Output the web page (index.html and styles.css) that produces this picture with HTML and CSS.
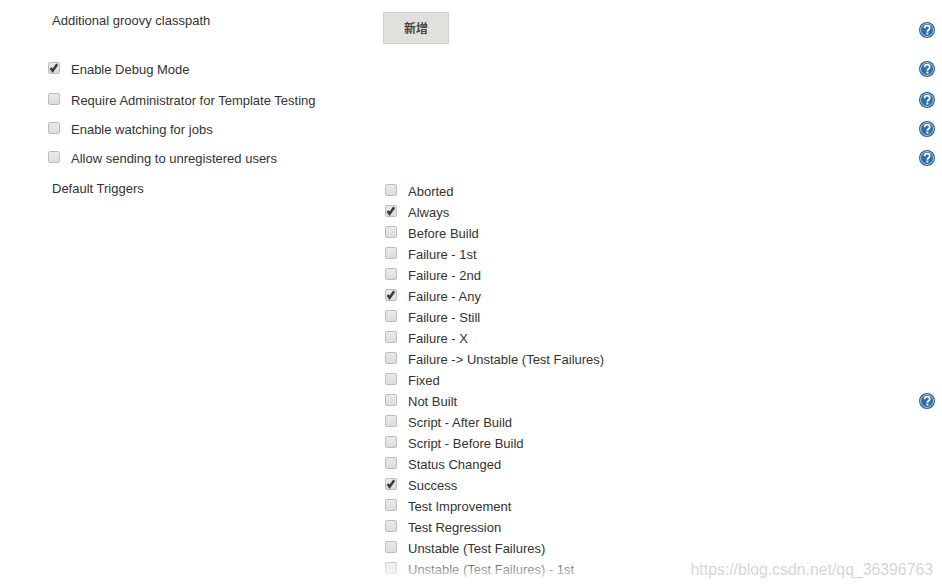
FILE: index.html
```html
<!DOCTYPE html>
<html lang="en">
<head>
<meta charset="utf-8">
<title>Configure</title>
<link rel="stylesheet" href="styles.css">
</head>
<body>
<svg class="defs" width="0" height="0" aria-hidden="true">
  <defs>
    <symbol id="help" viewBox="0 0 16 16">
      <circle cx="8" cy="8" r="8" fill="#2b6596"/>
      <circle cx="8" cy="8" r="6.3" fill="none" stroke="#cfe0ec" stroke-width="1"/>
      <circle cx="8" cy="8" r="5.7" fill="#2f6fa5"/>
      <path d="M5.5 6.2C5.6 4.5 6.7 3.6 8.1 3.6C9.7 3.6 10.7 4.5 10.7 5.9C10.7 6.9 10.1 7.5 9.4 8C8.7 8.5 8.4 8.8 8.4 9.7" fill="none" stroke="#fff" stroke-width="1.7"/>
      <rect x="7.4" y="10.6" width="2" height="1.9" fill="#fff"/>
    </symbol>
    <symbol id="tick" viewBox="0 0 12 12">
      <path d="M2.6 6L4.6 8.8L9.2 2.2" fill="none" stroke="#3a3a3a" stroke-width="2.5"/>
    </symbol>
  </defs>
</svg>
<main class="form">
  <section class="row row-classpath">
    <div class="label">Additional groovy classpath</div>
    <div class="field"><button class="btn" type="button">新增</button></div>
    <svg class="help help-top"><use href="#help"/></svg>
  </section>
  <section class="row row-check row-debug">
    <span class="box checked"><svg class="tick"><use href="#tick"/></svg></span>
    <span class="check-label">Enable Debug Mode</span>
    <svg class="help"><use href="#help"/></svg>
  </section>
  <section class="row row-check row-admin">
    <span class="box"></span>
    <span class="check-label">Require Administrator for Template Testing</span>
    <svg class="help"><use href="#help"/></svg>
  </section>
  <section class="row row-check row-watch">
    <span class="box"></span>
    <span class="check-label">Enable watching for jobs</span>
    <svg class="help"><use href="#help"/></svg>
  </section>
  <section class="row row-check row-allow">
    <span class="box"></span>
    <span class="check-label">Allow sending to unregistered users</span>
    <svg class="help"><use href="#help"/></svg>
  </section>
  <section class="row row-triggers">
    <div class="label">Default Triggers</div>
    <ul class="triggers">
      <li class="trigger"><span class="box"></span><span>Aborted</span></li>
      <li class="trigger"><span class="box checked"><svg class="tick"><use href="#tick"/></svg></span><span>Always</span></li>
      <li class="trigger"><span class="box"></span><span>Before Build</span></li>
      <li class="trigger"><span class="box"></span><span>Failure - 1st</span></li>
      <li class="trigger"><span class="box"></span><span>Failure - 2nd</span></li>
      <li class="trigger"><span class="box checked"><svg class="tick"><use href="#tick"/></svg></span><span>Failure - Any</span></li>
      <li class="trigger"><span class="box"></span><span>Failure - Still</span></li>
      <li class="trigger"><span class="box"></span><span>Failure - X</span></li>
      <li class="trigger"><span class="box"></span><span>Failure -&gt; Unstable (Test Failures)</span></li>
      <li class="trigger"><span class="box"></span><span>Fixed</span></li>
      <li class="trigger"><span class="box"></span><span>Not Built</span></li>
      <li class="trigger"><span class="box"></span><span>Script - After Build</span></li>
      <li class="trigger"><span class="box"></span><span>Script - Before Build</span></li>
      <li class="trigger"><span class="box"></span><span>Status Changed</span></li>
      <li class="trigger"><span class="box checked"><svg class="tick"><use href="#tick"/></svg></span><span>Success</span></li>
      <li class="trigger"><span class="box"></span><span>Test Improvement</span></li>
      <li class="trigger"><span class="box"></span><span>Test Regression</span></li>
      <li class="trigger"><span class="box"></span><span>Unstable (Test Failures)</span></li>
      <li class="trigger"><span class="box"></span><span>Unstable (Test Failures) - 1st</span></li>
    </ul>
    <svg class="help"><use href="#help"/></svg>
  </section>
</main>
<div class="fade"></div>
<div class="watermark">https://blog.csdn.net/qq_36396763</div>
</body>
</html>
```
FILE: styles.css
```css
html, body {
  margin: 0;
  height: 587px;
  overflow: hidden;
  background: #fff;
}
body {
  font-family: "Liberation Sans", Arial, "Noto Sans CJK SC", sans-serif;
  font-size: 13px;
  color: #333;
  position: relative;
}
.defs { position: absolute; }
.form {
  display: flex;
  flex-direction: column;
  width: 942px;
}
.row {
  display: flex;
  align-items: center;
  padding-right: 7px;
  padding-left: 48px;
  box-sizing: border-box;
}
.help {
  width: 16px;
  height: 16px;
  margin-left: auto;
  flex: none;
}
.label {
  width: 331px;
  padding-left: 4px;
  box-sizing: border-box;
  flex: none;
}
.row-classpath {
  height: 48px;
  padding-top: 12px;
  align-items: flex-start;
}
.row-classpath .label { margin-top: 1px; }
.help-top { margin-top: 10px; }
.btn {
  width: 66px;
  height: 32px;
  margin-left: 4px;
  border: 1px solid #d3d1cb;
  background: #e2e0dc;
  font: bold 12px "Noto Sans CJK SC", sans-serif;
  color: #444;
  padding: 0 0 2px;
}
.box {
  width: 12px;
  height: 12px;
  flex: none;
  box-sizing: border-box;
  border: 1px solid #bdbdbd;
  border-radius: 2px;
  background: linear-gradient(#eaeaea, #dcdcdc);
  display: block;
  position: relative;
}
.tick {
  width: 12px;
  height: 12px;
  position: absolute;
  left: -1px;
  top: -1px;
}
.row-check { height: 29px; }
.row-check .box { margin-top: -4px; }
.row-check .help { margin-top: -2px; }
.check-label { margin-left: 11px; }
.row-debug { height: 35px; margin-top: 4px; }
.row-admin { height: 27px; }
.row-watch { margin-top: 1px; }
.row-triggers {
  align-items: flex-start;
  height: 414px;
}
.row-triggers .label { margin-top: 8px; }
.row-triggers .help { margin-top: 220px; }
.triggers {
  list-style: none;
  margin: 8px 0 0;
  padding: 0 0 0 6px;
}
.trigger {
  display: flex;
  align-items: center;
  height: 21px;
  gap: 11px;
}
.trigger .box { margin-top: -4px; }
.fade {
  position: absolute;
  left: 0;
  right: 0;
  top: 557px;
  height: 30px;
  background: linear-gradient(rgba(255,255,255,0), #fff 85%);
}
.watermark {
  position: absolute;
  right: 9px;
  top: 561px;
  font-size: 15.8px;
  color: rgba(170,170,170,0.5);
}
```
